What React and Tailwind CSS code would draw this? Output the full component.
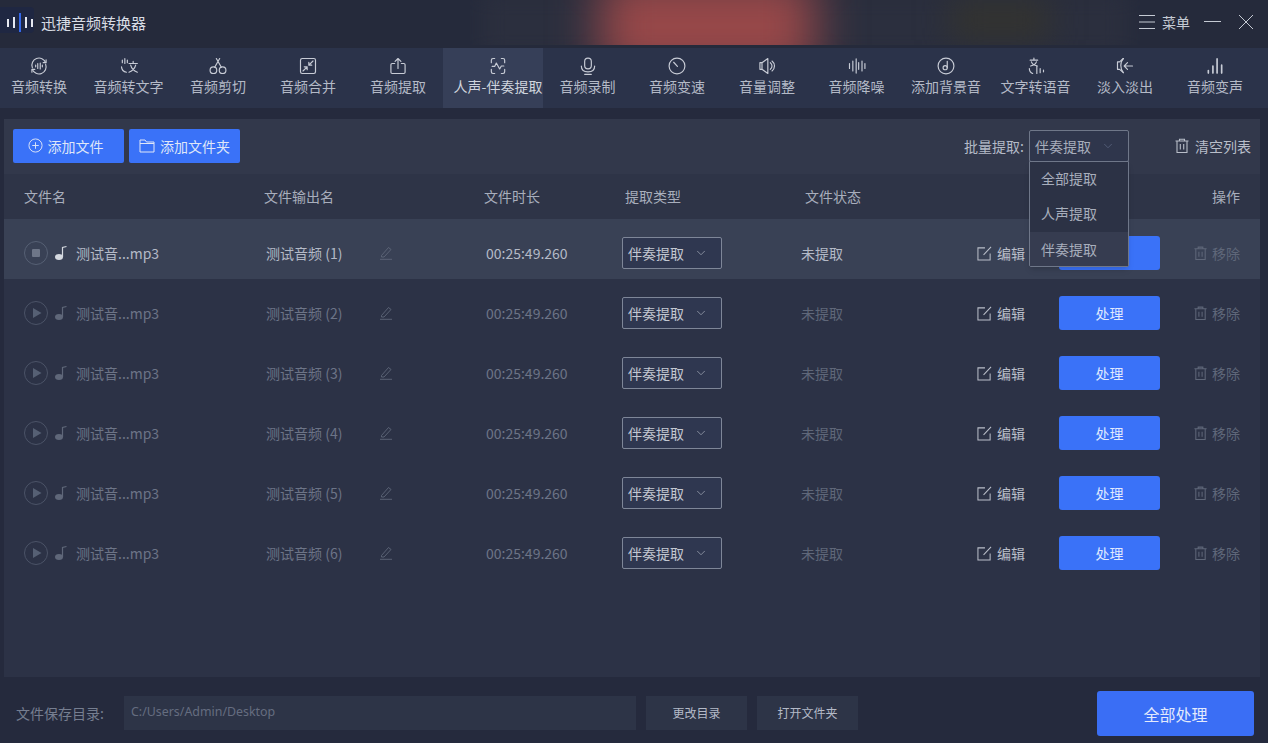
import { ChevronDown } from "lucide-react";

const cjk = { fontFamily: '"Noto Sans CJK SC", "Noto Sans", sans-serif' };

// tool tab icons, drawn on a 24 box
const Ic = ({ children, cls = "w-6 h-6" }) => (
  <svg viewBox="0 0 24 24" fill="none" stroke="currentColor" strokeWidth="1.4" strokeLinecap="round" strokeLinejoin="round" className={cls}>
    {children}
  </svg>
);

const icons = {
  convert: (
    <>
      <path d="M4 14a8.5 8.5 0 0 1 16-6M20 10a8.5 8.5 0 0 1-16 6" />
      <path d="M20.5 4.5V8H17M3.5 19.5V16H7" />
      <path d="M8 11v2M10.5 9v6M13.5 8.5v7M16 11v2" />
    </>
  ),
  text: (
    <>
      <path d="M7 3v6M4 5v3M10 5v3" />
      <path d="M3 13c.3 4 3 6 6 6.5" />
      <path d="M12 9h10M17 6.5V9M14 11c1 4 4 7 8 8.500M20 11c-1 4-4 7-8 8.500" />
    </>
  ),
  cut: (
    <>
      <circle cx="6.500" cy="17" r="4" />
      <circle cx="17.500" cy="17" r="4" />
      <path d="M8 13.500 14 3M16 13.500 10 3" />
    </>
  ),
  merge: (
    <>
      <rect x="3" y="3" width="18" height="18" rx="2" />
      <path d="M18 6l-5 5M13 7.500V11h3.500M6 18l5-5M11 16.500V13H7.500" />
    </>
  ),
  extract: (
    <>
      <path d="M8 9H5a1.500 1.500 0 0 0-1.500 1.500v9A1.500 1.500 0 0 0 5 21h14a1.500 1.500 0 0 0 1.500-1.500v-9A1.500 1.500 0 0 0 19 9h-3" />
      <path d="M12 15V3M8.500 6.500 12 3l3.500 3.500" />
    </>
  ),
  vocal: (
    <>
      <path d="M4 8V5a2 2 0 0 1 2-2h2M16 3h2a2 2 0 0 1 2 2v3M20 16v3a2 2 0 0 1-2 2h-2M8 21H6a2 2 0 0 1-2-2v-3" />
      <path d="M5 12.500h3l2-4 4 7 2-3.500h3" />
    </>
  ),
  mic: (
    <>
      <rect x="8" y="2.500" width="8" height="13" rx="4" />
      <path d="M4 12c0 5 3.500 7 8 7s8-2 8-7M8 22h8" />
    </>
  ),
  speed: (
    <>
      <circle cx="12" cy="12" r="9.500" />
      <path d="M8 7.500 12.500 12.500" />
    </>
  ),
  volume: (
    <>
      <path d="M6 8H3.500v8H6M6 8l7-5v18l-7-5z" />
      <path d="M16 8a5 5 0 0 1 0 8M18 6a8 8 0 0 1 3 6 8 8 0 0 1-3 6" />
    </>
  ),
  denoise: <path d="M3 9v6M7 6v12M11 3.500v17M14 8v8M18 6v12M21.500 9v6" />,
  bgm: (
    <>
      <circle cx="12" cy="12" r="9.500" />
      <circle cx="11" cy="14" r="2.500" />
      <path d="M13.500 14V6.500" />
    </>
  ),
  tts: (
    <>
      <path d="M5 5h9M9.500 2.500V5M6.500 7c.8 2.500 3.500 4 7 5M12.500 7c-.8 2.500-3.500 4-7 5" />
      <path d="M4 15c0 3 1.500 5 4 6M13 12v9M17 15v5M21 17v2" />
    </>
  ),
  fade: (
    <>
      <path d="M10 3 5.500 7H3v9h2.500l4.500 4" />
      <path d="M10 3c-2 2-3 5-3 8.500s1 6.500 3 8.500" />
      <path d="M11 12h10M15 8l-4 4 4 4" />
    </>
  ),
  voice: <path d="M4 17.500v3M9.500 12v8.500M14.500 3.500v17M20 11v9.500" strokeWidth="2" />,
};

const tabs = [
  { id: "convert", label: "音频转换", w: "w-[78px] mr-[6px]" },
  { id: "text", label: "音频转文字", w: "w-[89px]" },
  { id: "cut", label: "音频剪切", w: "w-[90px]" },
  { id: "merge", label: "音频合并", w: "w-[90px]" },
  { id: "extract", label: "音频提取", w: "w-[90px]" },
  { id: "vocal", label: "人声-伴奏提取", w: "w-[100px] pl-[10px]", active: true },
  { id: "mic", label: "音频录制", w: "w-[89px]" },
  { id: "speed", label: "音频变速", w: "w-[90px]" },
  { id: "volume", label: "音量调整", w: "w-[90px]" },
  { id: "denoise", label: "音频降噪", w: "w-[89px]" },
  { id: "bgm", label: "添加背景音", w: "w-[90px]" },
  { id: "tts", label: "文字转语音", w: "w-[89px]" },
  { id: "fade", label: "淡入淡出", w: "w-[90px]" },
  { id: "voice", label: "音频变声", w: "w-[90px]" },
];

const TrashIcon = ({ cls }) => (
  <svg viewBox="0 0 16 16" fill="none" stroke="currentColor" strokeWidth="1.1" className={cls}>
    <path d="M1.500 3h13M5.500 3V1.200h5V3M3 3v11.500h10V3M6.300 6v5.500M9.700 6v5.500" />
  </svg>
);

const EditIcon = () => (
  <svg viewBox="0 0 16 16" fill="none" stroke="currentColor" strokeWidth="1.100" className="w-[15px] h-[15px]">
    <path d="M8.500 2H1v13h13V8M15 1 7 9.500" />
  </svg>
);

const NoteIcon = ({ cls }) => (
  <svg viewBox="0 0 14 16" className={cls}>
    <ellipse cx="5" cy="12" rx="4" ry="3" fill="currentColor" />
    <path d="M8.500 12V2.500L12.500 1.500" fill="none" stroke="currentColor" strokeWidth="1.200" />
  </svg>
);

const PencilIcon = () => (
  <svg viewBox="0 0 14 14" fill="none" stroke="currentColor" strokeWidth="0.900" className="w-[14px] h-[14px] text-[#5f6779]">
    <path d="M2.500 9.500 9.500 1.500 12 3.500 5 11H2.500zM1 13.300h12" />
  </svg>
);

function FileRow({ n, active }) {
  const dim = active ? "text-[#b4bac7]" : "text-[#6c7487]";
  return (
    <div className={`h-[60px] pt-2 flex items-center text-sm ${active ? "bg-[#394155]" : ""}`}>
      <div className={`w-[262px] pl-5 flex items-center ${dim}`}>
        <span className={`w-6 h-6 rounded-full border-[1.5px] flex items-center justify-center shrink-0 ${active ? "border-[#566074]" : "border-[#4b5367]"}`}>
          {active ? (
            <span className="w-2 h-2 bg-[#6e7688] rounded-[1px]" />
          ) : (
            <svg viewBox="0 0 10 10" className="w-[10px] h-[10px] text-[#566074] ml-[1px]">
              <path d="M1 0 9.500 5 1 10z" fill="currentColor" />
            </svg>
          )}
        </span>
        <NoteIcon cls={`w-[14px] h-4 ml-[6px] mr-2 ${active ? "text-[#d5d9e0]" : "text-[#5f6779]"}`} />
        <span>测试音...mp3</span>
      </div>
      <div className={`w-[220px] flex items-center ${dim}`}>
        <span className="w-[113px] whitespace-nowrap">测试音频 ({n})</span>
        <PencilIcon />
      </div>
      <div className={`w-[136px] ${dim}`}>00:25:49.260</div>
      <div className="w-[179px]">
        <div className="w-[100px] h-8 border border-[#7e8698] rounded-[2px] bg-[#2f3750] flex items-center pl-[5px] text-[#c3c8d2]">
          <span className="whitespace-nowrap">伴奏提取</span>
          <ChevronDown className="w-[14px] h-[14px] ml-[10px] text-[#8f96a6]" strokeWidth={1.5} />
        </div>
      </div>
      <div className={`w-[176px] ${active ? "text-[#b4bac7]" : "text-[#5f6779]"}`}>未提取</div>
      <div className="w-[82px] flex items-center gap-[5px] text-[#b9bec9]">
        <EditIcon />
        <span>编辑</span>
      </div>
      <button className="w-[101px] h-[34px] bg-[#3a72f8] rounded-[3px] text-[#dfe8ff] text-sm shrink-0">处理</button>
      <div className="ml-[33px] flex items-center gap-1 text-[#5f6779]">
        <TrashIcon cls="w-[15px] h-[15px]" />
        <span>移除</span>
      </div>
    </div>
  );
}

export default function App() {
  return (
    <div style={cjk} className="w-[1268px] h-[743px] overflow-hidden flex flex-col bg-[#252a3d]">
      {/* Title bar */}
      <header className="relative h-12 shrink-0 flex items-center pb-[2px] bg-[#252a3b] overflow-hidden">
        {/* blurred ad strip */}
        <div className="absolute left-[470px] top-0 w-[670px] h-[45px] overflow-hidden">
          <div className="absolute left-[10px] top-[-10px] w-[650px] h-[70px] bg-[#2b2f3e] blur-md" />
          <div className="absolute left-[130px] top-[-24px] w-[215px] h-[100px] bg-[#984849] blur-xl" />
          <div className="absolute left-[480px] top-0 w-[100px] h-[40px] bg-[#33332f] blur-lg" />
        </div>
        <div className="relative w-[34px] h-[26px] mb-[6px] pt-[5px] pl-[7px] bg-[#1f2742] rounded-r-sm flex items-center gap-[4px]">
          <span className="w-[2px] h-[8px] bg-[#e6e9f0]" />
          <span className="w-[2px] h-[11px] bg-[#e6e9f0]" />
          <span className="w-[2px] h-[19px] bg-[#3568e8]" />
          <span className="w-[2px] h-[11px] bg-[#e6e9f0]" />
          <span className="w-[2px] h-[8px] bg-[#e6e9f0]" />
        </div>
        <span className="relative ml-[7px] text-[15px] text-[#d9dde5]">迅捷音频转换器</span>
        <div className="relative ml-auto flex items-center mb-[3px] text-[#c5cad4] pr-[15px]">
          <svg viewBox="0 0 16 16" stroke="currentColor" strokeWidth="1" className="w-4 h-4 mr-[7px]">
            <path d="M0 1.500h16M0 8h16M0 14.500h16" />
          </svg>
          <span className="text-sm">菜单</span>
          <span className="w-[17px] h-[1px] bg-current ml-[14px]" />
          <svg viewBox="0 0 14 14" stroke="currentColor" strokeWidth="1" className="w-[14px] h-[14px] ml-[18px]">
            <path d="M0 0l14 14M14 0 0 14" />
          </svg>
        </div>
      </header>

      {/* Tools */}
      <nav className="h-[60px] shrink-0 flex bg-[#2b334a] text-[#b4bac7]">
        {tabs.map((t) => (
          <div key={t.id} className={`${t.w} shrink-0 flex flex-col items-center pt-[8px] text-sm leading-5 whitespace-nowrap ${t.active ? "bg-[#363f58] text-[#d0d5de]" : ""}`}>
            <Ic cls="w-5 h-5 text-[#c8ccd6]">{icons[t.id]}</Ic>
            <span className="leading-[21px]">{t.label}</span>
          </div>
        ))}
      </nav>

      {/* Main panel */}
      <main className="relative h-[558px] shrink-0 mt-[11px] ml-1 mr-2 bg-[#2c3246]">
        <div className="h-[55px] bg-[#32384b] flex items-center pl-[9px] text-sm">
          <button className="w-[111px] h-[34px] mt-[-2px] pr-[6px] bg-[#3a72f8] rounded-[2px] flex items-center justify-center gap-[5px] text-[#dfe6f8]">
            <svg viewBox="0 0 16 16" fill="none" stroke="currentColor" strokeWidth="1" className="w-[15px] h-[15px]">
              <circle cx="8" cy="8" r="7" />
              <path d="M8 4.500v7M4.500 8h7" />
            </svg>
            添加文件
          </button>
          <button className="w-[111px] h-[34px] mt-[-2px] ml-[5px] bg-[#3a72f8] rounded-[2px] flex items-center justify-center gap-[5px] text-[#dfe6f8]">
            <svg viewBox="0 0 16 16" fill="none" stroke="currentColor" strokeWidth="1" className="w-4 h-4">
              <path d="M1 2h5l1.500 2H15v10H1zM1 5.500h14" />
            </svg>
            添加文件夹
          </button>
          <span className="ml-auto text-[#b4bac7] mt-[-2px]">批量提取:</span>
          <div className="w-[100px] h-8 mt-[-2px] ml-[5px] border border-[#6f7789] rounded-[2px] bg-[#2f364c] flex items-center pl-[5px] text-[#a8aebc]">
            伴奏提取
            <ChevronDown className="w-[14px] h-[14px] ml-[10px] text-[#56607a]" strokeWidth={1.5} />
          </div>
          <div className="ml-[45px] mr-[9px] mt-[-2px] flex items-center gap-[5px] text-[#b9bec9]">
            <TrashIcon cls="w-4 h-4" />
            清空列表
          </div>
        </div>
        <div className="h-[45px] pb-[2px] flex items-center text-sm text-[#a8aebc] bg-[#2e3447]">
          <span className="w-[260px] pl-5">文件名</span>
          <span className="w-[220px]">文件输出名</span>
          <span className="w-[141px]">文件时长</span>
          <span className="w-[180px]">提取类型</span>
          <span>文件状态</span>
          <span className="ml-auto pr-5">操作</span>
        </div>
        {[1, 2, 3, 4, 5, 6].map((n) => (
          <FileRow key={n} n={n} active={n === 1} />
        ))}

        {/* Batch dropdown */}
        <div className="absolute left-[1025px] top-[42px] w-[100px] h-[106px] border border-[#6f7789] rounded-b-[2px] bg-[#2c3245] text-sm text-[#a8aebc] shadow-md flex flex-col">
          <div className="h-[35px] pb-[3px] flex items-center pl-[11px]">全部提取</div>
          <div className="h-[35px] pb-[3px] flex items-center pl-[11px]">人声提取</div>
          <div className="flex-1 pb-[1px] flex items-center pl-[11px] bg-[#363c50]">伴奏提取</div>
        </div>
      </main>

      {/* Footer */}
      <footer className="flex-1 flex items-center pl-4 pr-[14px]">
        <span className="w-[108px] text-sm text-[#767e90] mt-[5px]">文件保存目录:</span>
        <div className="w-[512px] h-[34px] mt-[5px] bg-[#2d3447] flex items-center pl-[7px] text-[12.4px] text-[#656d80]" style={{ fontFamily: '"Noto Sans", sans-serif' }}>
          C:/Users/Admin/Desktop
        </div>
        <button className="w-[101px] h-[34px] mt-[5px] ml-[10px] bg-[#2d3447] text-xs text-[#b4bac7]">更改目录</button>
        <button className="w-[101px] h-[34px] mt-[5px] ml-[10px] bg-[#2d3447] text-xs text-[#b4bac7]">打开文件夹</button>
        <button className="w-[157px] h-[45px] ml-auto mt-[7px] bg-[#3a6ef5] rounded-[3px] text-base text-[#e3eafc]">全部处理</button>
      </footer>
    </div>
  );
}
